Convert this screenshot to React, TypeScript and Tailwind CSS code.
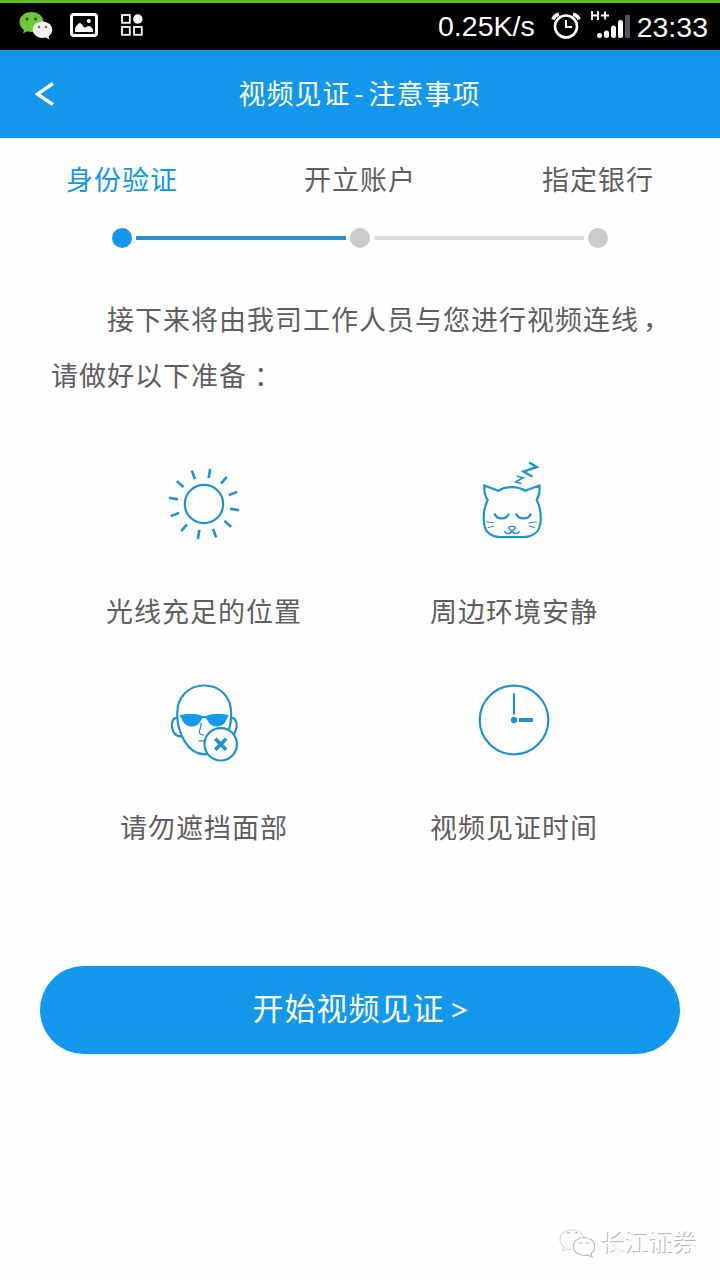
import type { ReactNode } from "react"

const steps = ["身份验证", "开立账户", "指定银行"]

function StatusBar() {
  return (
    <div className="flex h-[50px] items-center border-t-[3px] border-[#62c424] bg-black pl-[19px] pr-[12px] font-['Liberation_Sans',sans-serif] tracking-normal text-white">
      <svg width="34" height="30" viewBox="0 0 34 30" className="mb-[2px]">
        <path d="M12.500 1C5.500 1 .5 5.500 .5 11c0 3.300 1.700 6 4.500 8l-1 3.500 4.200-2.200c1.400.4 2.800.7 4.300.7 7 0 12-4.500 12-10S19.500 1 12.500 1z" fill="#6fc837" />
        <path d="M23.500 10.500c-5.500 0-9.700 3.600-9.700 8.200s4.200 8.200 9.700 8.200c1.200 0 2.300-.2 3.400-.5l3.700 2-1-3.200c2.200-1.600 3.600-3.800 3.600-6.500 0-4.600-4.200-8.200-9.700-8.200z" fill="#f1f1f1" />
        <circle cx="8" cy="8" r="1.500" fill="#24500c" />
        <circle cx="16.500" cy="8" r="1.500" fill="#24500c" />
        <circle cx="20" cy="16" r="1.200" fill="#666" />
        <circle cx="27" cy="16" r="1.200" fill="#666" />
      </svg>
      <svg width="28" height="24" viewBox="0 0 28 24" className="mb-[3px] ml-[17px]">
        <rect x="1.500" y="1.500" width="25" height="21" rx="2.500" fill="none" stroke="#fff" strokeWidth="3" />
        <path d="M5 19v-4c2-3 3.500-5 5-5 2 0 3 4.500 5 4.500s2-1.500 3.500-1.500 3.500 1.500 4.500 3.500V19z" fill="#fff" />
        <circle cx="18.800" cy="8" r="2.100" fill="#fff" />
      </svg>
      <svg width="22" height="22" viewBox="0 0 22 22" className="mb-[3px] ml-[23px]">
        <g fill="none" stroke="#fff" strokeWidth="1.800">
          <rect x="1" y="1" width="7.800" height="7.800" />
          <rect x="1" y="13" width="7.800" height="7.800" />
          <rect x="13" y="13" width="7.800" height="7.800" />
        </g>
        <circle cx="16.800" cy="5" r="4.700" fill="#fff" />
      </svg>
      <span className="ml-auto text-[28.500px] leading-none">0.25K/s</span>
      <svg width="30" height="28" viewBox="0 0 30 28" fill="none" stroke="#fff" className="mb-[2px] ml-[16px]">
        <circle cx="15" cy="14.500" r="11" strokeWidth="2.600" />
        <path d="M15 8v7h6" strokeWidth="2" />
        <path d="M2 7.500C3 4.500 5 2.800 8 2.200M28 7.500C27 4.500 25 2.800 22 2.200" strokeWidth="3.600" />
      </svg>
      <svg width="42" height="32" viewBox="0 0 42 32" className="mb-[5px] ml-[9px]">
        <path d="M2 3v9M8 3v9M2 7.500h6M11 7.500h8M15 3.500v8" stroke="#fff" strokeWidth="1.800" fill="none" />
        <g stroke="#fff" strokeWidth="5" strokeLinecap="round">
          <path d="M9.500 27.500v.1M16.500 25v2.500M23.500 20v7.500M30.500 14.500v13" />
        </g>
        <rect x="35" y="7" width="5" height="23" rx="1" fill="#555" />
      </svg>
      <span className="ml-[5px] mt-px text-[28.500px] leading-none">23:33</span>
    </div>
  )
}

function Header() {
  return (
    <header className="flex h-[88px] items-center bg-[#1297ea] px-[35px] text-white">
      <svg width="19" height="24" viewBox="0 0 19 24" fill="none" stroke="currentColor" strokeWidth="3.400">
        <path d="M18 1.500L2.500 12.200 18 22.500" />
      </svg>
      <h1 className="mb-[3px] flex flex-1 items-center justify-center text-[27px] leading-none tracking-[1px]">
        <span>视频见证</span>
        <span className="w-[18px] text-center">-</span>
        <span>注意事项</span>
      </h1>
      <div className="w-[20px]" />
    </header>
  )
}

function Steps() {
  return (
    <div className="px-[3px] pt-[21px]">
      <div className="grid grid-cols-3 text-center leading-[40px]">
        {steps.map((s, i) => (
          <div key={s} className={i === 0 ? "text-[#1297e0]" : ""}>{s}</div>
        ))}
      </div>
      <div className="mt-[29px] flex items-center gap-1 px-[109px]">
        <div className="size-5 rounded-full bg-[#1297e8]" />
        <div className="h-1 flex-1 bg-[#2390cf]" />
        <div className="size-5 rounded-full bg-[#cbcbcb]" />
        <div className="h-1 flex-1 bg-[#dcdcdc]" />
        <div className="size-5 rounded-full bg-[#cbcbcb]" />
      </div>
    </div>
  )
}

function Tip({ label, children }: { label: string; children: ReactNode }) {
  return (
    <div className="flex flex-col items-center">
      <svg width="80" height="88" viewBox="0 0 80 88" fill="none" stroke="#2292cc" strokeWidth="2.200">
        {children}
      </svg>
      <div className="mt-[43px] leading-[40px]">{label}</div>
    </div>
  )
}

const rays = [10, 40, 70, 100, 130, 160, 190, 220, 250, 280, 310, 340]

function Tips() {
  return (
    <div className="mt-[57px] grid grid-cols-2 gap-y-[45px] pl-[49px] pr-[51px]">
      <Tip label="光线充足的位置">
        <circle cx="40" cy="44" r="19.200" />
        {rays.map((a) => (
          <path key={a} d="M40 17.500V8.500" strokeWidth="2.600" transform={`rotate(${a} 40 44)`} />
        ))}
      </Tip>
      <Tip label="周边环境安静">
        <path d="M10.300 25.500L24.300 30.700C32 26 43.500 26 51 30.700L65.500 25.500C66 31 65 36 62.700 40C66 46 67 52 66.700 60C66.500 71 60 76.800 50 77H26C16 76.800 10 71 9.700 60C9.500 52 10.500 46 13.700 40C11 36 10 31 10.300 25.500z" />
        <path d="M20.300 53.500C23 60 32.500 60 35 53.500M42 53.500C44.500 60 54.500 60 57 53.500" />
        <path d="M34.700 67.600C35 66 41 66 41.300 67.600C41 69.500 39 70.500 38 70.500S35 69.500 34.700 67.600zM30.500 71C32 74.500 37 74.500 38 70.500C39 74.500 44 74.500 45.500 71" strokeWidth="1.400" />
        <path d="M12 61.700L20.300 63M13.700 67.700L20.300 66M54.300 63L62.700 61.700M54.500 66L61 67.700" strokeWidth="1" />
        <path d="M55 2.500L63 7L49.500 11.500L58.500 16.700" strokeWidth="2.400" />
        <path d="M42.700 16L49 17.700L41.700 22L47.500 23.500" strokeWidth="1.700" />
      </Tip>
      <Tip label="请勿遮挡面部">
        <path d="M13.500 42C9 41.500 7.300 46 8 51C9 57 12 60.500 17 60.500M67 42C71.500 41.500 73.200 46 72.500 51C72 54 71.300 56 70 58" />
        <path d="M40.200 9.500C24.500 9.500 13.200 21 13.200 37.500C13.200 59 25 78.300 40.200 78.300S67.200 59 67.200 37.500C67.200 21 56 9.500 40.200 9.500z" />
        <path d="M15.500 39.500C22 37.500 33 37.800 37 39.500Q40.200 40.500 43.500 39.500C47.500 37.800 58.500 37.500 65 39.500C64 41 63 42 62.500 43.500C59.500 52.500 47.500 52.500 44 45.500C43 43 42 42 40.200 42S37.500 43 36.500 45.500C33 52.500 21 52.500 18 43.500C17.500 42 16.500 41 15.500 39.500z" fill="#159ae6" stroke="none" />
        <path d="M37 46.500C37.500 51 35.300 54 35.300 56.500C35.500 58.500 37 59 40 59M34.500 64.800H41" strokeWidth="1.200" />
        <circle cx="56.700" cy="68.300" r="16.200" fill="#fff" />
        <path d="M51.200 62.800L62.200 73.800M62.200 62.800L51.200 73.800" strokeWidth="3.600" />
      </Tip>
      <Tip label="视频见证时间">
        <circle cx="40" cy="44" r="34.300" />
        <path d="M40 17.300V38.500" />
        <circle cx="40" cy="44" r="3.200" fill="#2292cc" stroke="none" />
        <path d="M45 44H59" strokeWidth="4" />
      </Tip>
    </div>
  )
}

function Watermark() {
  return (
    <div className="mt-[173px] flex items-center justify-end gap-[7px] pr-[22px] text-[24px] leading-[32px] tracking-normal text-[#fefefe] [text-shadow:-1px_-1px_0_#b4b4b4]">
      <svg width="36" height="32" viewBox="0 0 36 32" fill="none" stroke="#bbb" strokeWidth="1.200">
        <path d="M13 22.500c-1.600 0-3-.2-4.400-.6L4 24l1-4C2.500 18 1 15.500 1 12.500 1 7 6.500 3 13 3c6 0 10.500 3 11.700 7.200" stroke="#dadada" />
        <path d="M25 10.500c-6 0-10.700 4-10.700 9s4.700 9 10.700 9c1.400 0 2.600-.2 3.800-.6l4.200 2-1-3.400c2.300-1.700 3.700-4.200 3.700-7 0-5-4.700-9-10.700-9z" fill="#fff" />
        <path d="M8 6.500q1.500-2 3 0M16 6.500q1.500-2 3 0M20 16.500q1.500-2 3 0M27 16.500q1.500-2 3 0" />
      </svg>
      <span>长江证券</span>
    </div>
  )
}

export default function App() {
  return (
    <div className="h-[1280px] w-[720px] overflow-hidden bg-[#fefefe] font-['Noto_Sans_CJK_SC',sans-serif] text-[27px] tracking-[1px] text-[#5e5e5e]">
      <StatusBar />
      <Header />
      <Steps />
      <p className="mt-[43px] pl-[51px] pr-[49px] indent-[56px] leading-[56px]">
        接下来将由我司工作人员与您进行视频连线<span className="relative -top-px left-[4px]">，</span>
        请做好以下准备<span className="relative left-[7px]">：</span>
      </p>
      <Tips />
      <div className="mt-[119px] px-10">
        <button className="flex h-[88px] w-full items-center justify-center gap-[6px] rounded-full bg-[#1297ea] text-[31px] leading-none text-white">
          <span className="mb-[7px]">开始视频见证</span>
          <svg width="17" height="18" viewBox="0 0 17 18" fill="none" stroke="currentColor" strokeWidth="2.200">
            <path d="M1.500 3L14.500 9.200L1.500 15.500" />
          </svg>
        </button>
      </div>
      <Watermark />
    </div>
  )
}
